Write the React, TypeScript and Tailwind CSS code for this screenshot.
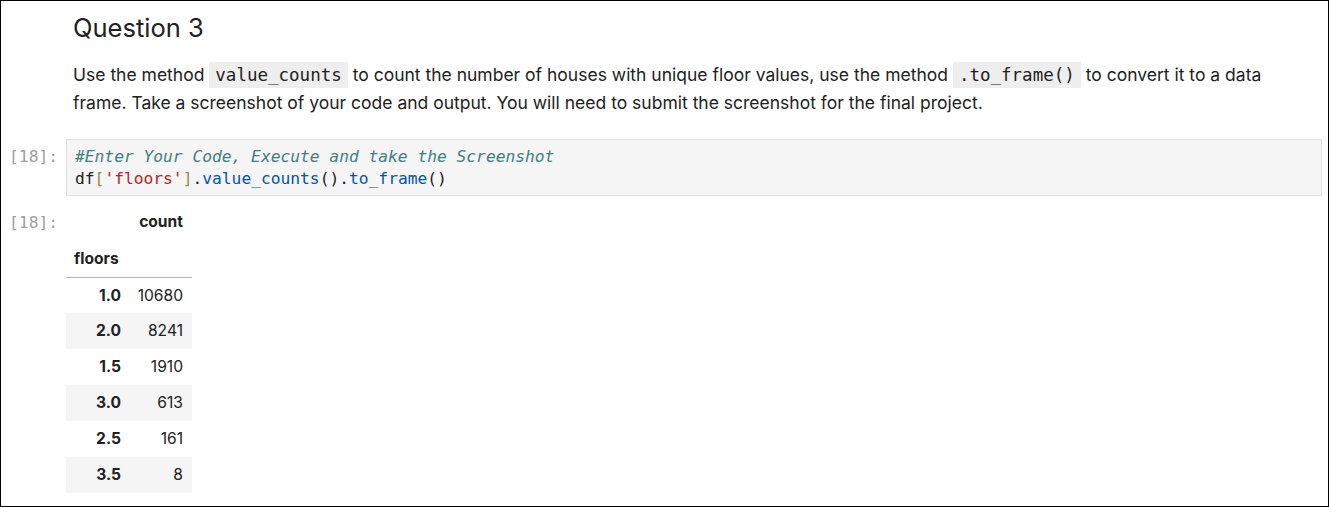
import React from "react";

const mono = "font-['DejaVu_Sans_Mono',monospace]";

function Prompt({ children }: { children: React.ReactNode }) {
  return (
    <div className={`w-[57px] mr-[8px] shrink-0 text-right text-[16.25px] leading-[22px] text-[#a0a0a0] ${mono}`}>
      {children}
    </div>
  );
}

function Code({ children }: { children: React.ReactNode }) {
  return (
    <code className={`${mono} text-[17.5px] leading-none bg-[#eeeeee] px-[6px] py-[3px] text-[#212121]`}>
      {children}
    </code>
  );
}

const rows: [string, string][] = [
  ["1.0", "10680"],
  ["2.0", "8241"],
  ["1.5", "1910"],
  ["3.0", "613"],
  ["2.5", "161"],
  ["3.5", "8"],
];

export default function App() {
  return (
    <div className="w-[1329px] h-[507px] border border-black bg-white overflow-hidden font-['Inter',sans-serif] text-[#212121] pr-[6px]">
      {/* Markdown cell */}
      <div className="flex">
        <div className="w-[65px] shrink-0" />
        <div className="pl-[7px] pr-[25px] flex-1">
          <h3 className="pt-[12px] text-[25.5px] leading-[30px] font-normal">Question 3</h3>
          <p className="mt-[18px] text-[17.5px] leading-[28px]">
            Use the method <Code>value_counts</Code> to count the number of houses with unique floor values, use the
            method <Code>.to_frame()</Code> to convert it to a data frame. Take a screenshot of your code and output. You
            will need to submit the screenshot for the final project.
          </p>
        </div>
      </div>

      {/* Code cell */}
      <div className="flex mt-[22px]">
        <div className="pt-[7px]">
          <Prompt>[18]:</Prompt>
        </div>
        <div
          className={`flex-1 border border-[#e0e0e0] bg-[#f5f5f5] pt-[6px] pb-[5px] pl-[8px] text-[16.25px] leading-[22px] ${mono}`}
        >
          <div className="italic text-[#408080]">#Enter Your Code, Execute and take the Screenshot</div>
          <div className="text-[#212121]">
            df<span className="text-[#998a4e]">[</span>
            <span className="text-[#ba2121]">'floors'</span>
            <span className="text-[#998a4e]">]</span>.<span className="text-[#0055aa]">value_counts</span>().
            <span className="text-[#0055aa]">to_frame</span>()
          </div>
        </div>
      </div>

      {/* Output */}
      <div className="flex mt-[8px]">
        <div className="pt-[8px]">
          <Prompt>[18]:</Prompt>
        </div>
        <table className="border-collapse text-[15.6px] text-[#212121]">
          <thead className="border-b border-[#b5b5b5]">
            <tr className="h-[36px]">
              <th className="w-[63px]" />
              <th className="w-[63px] pr-[9px] text-right font-bold">count</th>
            </tr>
            <tr className="h-[37px]">
              <th className="pl-[8px] text-left font-bold">floors</th>
              <th />
            </tr>
          </thead>
          <tbody>
            {rows.map(([k, v], i) => (
              <tr key={k} className={`h-[36px] ${i % 2 === 1 ? "bg-[#f5f5f5]" : ""}`}>
                <th className="pr-[8px] text-right font-bold">{k}</th>
                <td className="pr-[9px] text-right">{v}</td>
              </tr>
            ))}
          </tbody>
        </table>
      </div>
    </div>
  );
}
